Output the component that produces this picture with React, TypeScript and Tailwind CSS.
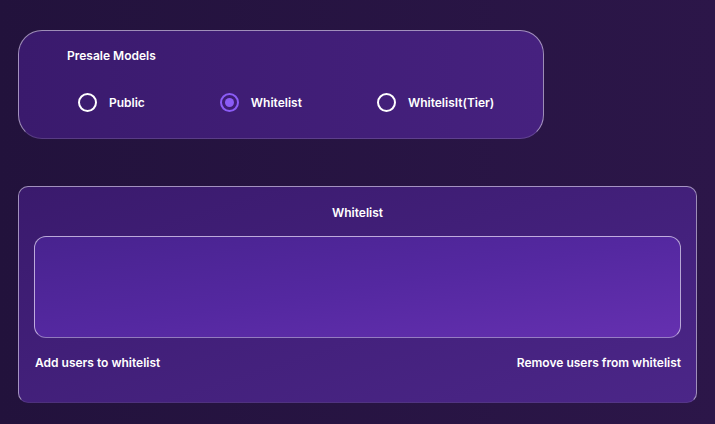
import React from 'react';

const models = ['Public', 'Whitelist', 'WhitelisIt(Tier)'];

const Radio: React.FC<{ label: string; checked?: boolean }> = ({ label, checked }) => (
  <label className="flex items-center gap-3 cursor-pointer">
    <span
      className={
        checked
          ? 'w-[19px] h-[19px] rounded-full border-2 border-[#8b5cf6] flex items-center justify-center'
          : 'w-[19px] h-[19px] rounded-full border-2 border-white'
      }
    >
      {checked && <span className="w-[9px] h-[9px] rounded-full bg-[#8b5cf6]" />}
    </span>
    <span className="text-[12px] font-semibold text-white">{label}</span>
  </label>
);

export default function App() {
  return (
    <div
      className="min-h-screen w-full bg-gradient-to-r from-[#22123c] to-[#2c1649] px-[18px] pt-[30px] pb-5"
      style={{ fontFamily: 'Inter, "Noto Sans", sans-serif' }}
    >
      <div className="w-[526px] h-[109px] rounded-[24px] border border-white/50 border-b-white/15 bg-gradient-to-r from-[#3a1a6d] to-[#46217f] pt-[17px] pl-[48px]">
        <h2 className="text-[12px] font-semibold text-white leading-4">Presale Models</h2>
        <div className="flex gap-[75px] mt-[29px] ml-[11px]">
          {models.map((m) => (
            <Radio key={m} label={m} checked={m === 'Whitelist'} />
          ))}
        </div>
      </div>

      <div className="mt-[47px] w-[679px] h-[217px] rounded-[10px] border border-white/50 border-b-white/10 bg-gradient-to-br from-[#3a1a6d] to-[#4b2688] px-[15px] pt-[18px]">
        <h2 className="text-center text-[12px] font-semibold text-white leading-4">Whitelist</h2>
        <div className="mt-[15px] h-[102px] rounded-[12px] border border-white/60 border-b-white/40 bg-gradient-to-br from-[#48238f] via-[#5428a0] to-[#6530b0]" />
        <div className="flex justify-between mt-[17px] pl-px">
          <span className="text-[12px] font-semibold text-white leading-4">Add users to whitelist</span>
          <span className="text-[12px] font-semibold text-white leading-4">Remove users from whitelist</span>
        </div>
      </div>
    </div>
  );
}
